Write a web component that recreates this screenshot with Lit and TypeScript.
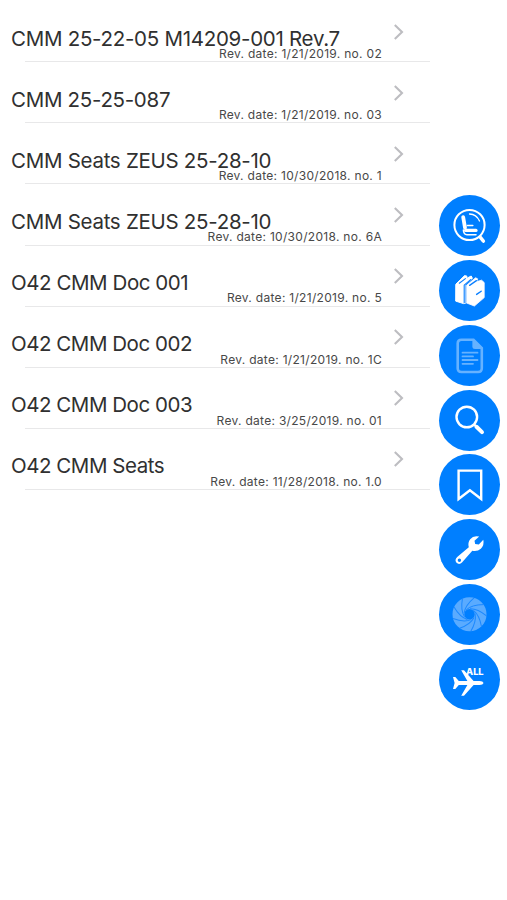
import { LitElement, html, css, svg } from "lit";
import { customElement, property } from "lit/decorators.js";
import { styleMap } from "lit/directives/style-map.js";

const documents = [
  { title: "CMM 25-22-05 M14209-001 Rev.7", revision: "Rev. date: 1/21/2019. no. 02", tracking: -0.28 },
  { title: "CMM 25-25-087", revision: "Rev. date: 1/21/2019. no. 03", tracking: -0.3 },
  { title: "CMM Seats ZEUS 25-28-10", revision: "Rev. date: 10/30/2018. no. 1", tracking: -0.28 },
  { title: "CMM Seats ZEUS 25-28-10", revision: "Rev. date: 10/30/2018. no. 6A", tracking: -0.28 },
  { title: "O42 CMM Doc 001", revision: "Rev. date: 1/21/2019. no. 5", tracking: -0.43 },
  { title: "O42 CMM Doc 002", revision: "Rev. date: 1/21/2019. no. 1C", tracking: -0.46 },
  { title: "O42 CMM Doc 003", revision: "Rev. date: 3/25/2019. no. 01", tracking: -0.46 },
  { title: "O42 CMM Seats", revision: "Rev. date: 11/28/2018. no. 1.0", tracking: -0.46 },
];

const blades = Array.from({ length: 9 }, (_, i) => i * 40);

// Every glyph is drawn in the 61 x 61 box of its round button.
const icons = {
  seat: svg`
    <g fill="none" stroke="#fff" stroke-linecap="round">
      <circle cx="30.5" cy="30" r="15.1" stroke-width="2"/>
      <path d="M41.5 42.5 44.3 46" stroke-width="3.6"/>
      <path d="M30.5 19q7 .2 10 7" stroke-width="1.3"/>
      <path d="M24.2 22.2 26 32.6" stroke-width="3.8"/>
      <path d="M26.6 35.4H37" stroke-width="3.2"/>
      <path d="M28.4 30.6H33.8" stroke-width="1.5"/>
      <path d="M24.4 35q.2 4.7 3.6 4.7H37" stroke-width="1.5"/>
    </g>`,
  books: svg`
    <g stroke-linejoin="round" stroke-linecap="round">
      <path d="M17 24 25.6 15.6 28 16.2 27.2 18.6 32.2 16 33.6 18.6 27.4 24.2V43.4L24.5 43.6 17 41.2Z" fill="#fff" stroke="#fff"/>
      <path d="M20.3 23.2 26.4 18.6M25.2 25.2 31.6 19.6M25.2 25.2V42.8" fill="none" stroke="#0a7fff" stroke-width="1.1"/>
      <path d="M27.6 25.2 36.6 17.8 38.6 18.8 37.6 21.6 42.6 20.2 45.2 22.6V37.6L35.4 46 27.6 43Z" fill="#fff" stroke="#0a7fff" stroke-width="2.4"/>
      <path d="M27.6 25.2 36.6 17.8 38.6 18.8 37.6 21.6 42.6 20.2 45.2 22.6V37.6L35.4 46 27.6 43Z" fill="#fff" stroke="#fff" stroke-width=".8"/>
      <path d="M30.6 25.4 37.4 20.6" fill="none" stroke="#0a7fff" stroke-width="1.3"/>
      <path d="M37.6 34.4 42.2 31.2" fill="none" stroke="#0a7fff" stroke-width="1.4"/>
    </g>`,
  page: svg`
    <g opacity=".4">
      <path d="M22.5 14.8H34.5L42.8 23V43.2Q42.8 47 39 47H22.5Q18.7 47 18.7 43.2V18.6Q18.7 14.8 22.5 14.8Z" fill="none" stroke="#fff" stroke-width="2.6"/>
      <path d="M33.4 14.5 43 24H36Q33.4 24 33.4 21.5Z" fill="#fff"/>
      <path d="M23.5 27.7H38.5M23.5 31.4H34M23.5 35H38.5M23.5 38.8H34" fill="none" stroke="#fff" stroke-width="1.8" stroke-linecap="round"/>
    </g>`,
  search: svg`
    <g fill="none" stroke="#fff">
      <circle cx="27.8" cy="27" r="10.3" stroke-width="2.4"/>
      <path d="M35 34.4 38 37.3" stroke-width="2.2"/>
      <path d="M37.5 36.8 43 42.1" stroke-width="4" stroke-linecap="round"/>
    </g>`,
  bookmark: svg`
    <path d="M19.6 16.6H42.2V45L30.9 36.3 19.6 45Z" fill="none" stroke="#fff" stroke-width="2.4"/>`,
  wrench: svg`
    <path fill="#fff" fill-rule="evenodd" d="M40.2 17.6Q34.5 16.1 31.2 20.2 28.5 23.7 29.8 28.2L18.2 38.1Q15.2 41 17.5 43.8 20.3 46.3 23.2 43.3L33.3 31.8Q38.4 32.9 41.8 29.7 45.5 26.2 44.3 20.8L39.8 25.6 36.2 25 35.5 21.8ZM20.4 39.5A1.7 1.7 0 1 0 20.4 42.9 1.7 1.7 0 1 0 20.4 39.5Z"/>`,
  aperture: svg`
    <circle cx="30.5" cy="30.3" r="11.1" fill="none" stroke="#5aabff" stroke-width="11.8"/>
    ${blades.map(
      (angle) => svg`<path transform=${`rotate(${angle} 30.5 30.3)`} d="M27.2 25.8Q33 20.6 44.6 20.6" fill="none" stroke="#1a88ff" stroke-width="1"/>`,
    )}`,
  plane: svg`
    <path fill="#fff" d="M14 28H16.3L19.8 32H28.4L22.2 21.2H25L34.6 32H40.5Q44 32.2 44.6 34 44 35.8 40.5 36H34.6L25 46.8H22.2L28.4 36H19.8L16.3 40H14L15.6 34Z"/>
    <text x="27" y="25.8" textLength="17.6" lengthAdjust="spacingAndGlyphs" font-family="Inter, sans-serif" font-size="8.5" font-weight="800" fill="#fff">ALL</text>`,
};

type IconName = keyof typeof icons;

@customElement("document-row")
class DocumentRow extends LitElement {
  @property() heading = "";
  @property() revision = "";
  @property({ type: Number }) tracking = 0;

  static styles = css`
    :host {
      display: grid;
      grid-template-columns: 371px 1fr;
      grid-template-rows: 34.3px 1fr;
      box-sizing: border-box;
      height: 61.1px;
      margin-left: 11px;
      background: linear-gradient(#e8e8e9, #e8e8e9) 14px 100% / 405px 1px no-repeat;
      white-space: nowrap;
    }
    .title {
      font-size: 20.5px;
      line-height: 26px;
      padding-top: 24.4px;
      height: 26px;
      color: #303030;
    }
    .chevron {
      width: 11px;
      height: 18px;
      margin: 21.6px 0 0 10.5px;
    }
    .revision {
      grid-row: 2;
      justify-self: end;
      font-size: 12px;
      letter-spacing: 0.3px;
      line-height: 16px;
      margin-top: 10.6px;
      color: #484848;
    }
  `;

  render() {
    return html`
      <div class="title" style=${styleMap({ letterSpacing: `${this.tracking}px` })}>${this.heading}</div>
      <svg class="chevron" viewBox="0 0 11 18">
        <path d="M1.8 2 9 9 1.8 16" fill="none" stroke="#bdbdc1" stroke-width="2.1" />
      </svg>
      <div class="revision">${this.revision}</div>
    `;
  }
}

@customElement("round-button")
class RoundButton extends LitElement {
  @property() icon: IconName = "seat";

  static styles = css`
    :host {
      display: block;
      width: 61px;
      height: 61px;
      border-radius: 50%;
      background: #007fff;
    }
    .glyph {
      display: block;
      width: 61px;
      height: 61px;
    }
  `;

  render() {
    return html`<svg class="glyph" viewBox="0 0 61 61">${icons[this.icon]}</svg>`;
  }
}

@customElement("app-root")
class AppRoot extends LitElement {
  static styles = css`
    :host {
      display: flex;
      width: 507px;
      height: 900px;
      overflow: hidden;
      background: #fff;
      font-family: Inter, "Liberation Sans", sans-serif;
    }
    .list {
      width: 439px;
      padding-top: 1.2px;
    }
    .tools {
      display: flex;
      flex-direction: column;
      gap: 3.75px;
      padding-top: 195.3px;
    }
  `;

  render() {
    return html`
      <div class="list">
        ${documents.map(
          (d) => html`<document-row
            .heading=${d.title}
            .revision=${d.revision}
            .tracking=${d.tracking}
          ></document-row>`,
        )}
      </div>
      <div class="tools">
        ${(Object.keys(icons) as IconName[]).map(
          (name) => html`<round-button .icon=${name}></round-button>`,
        )}
      </div>
    `;
  }
}
